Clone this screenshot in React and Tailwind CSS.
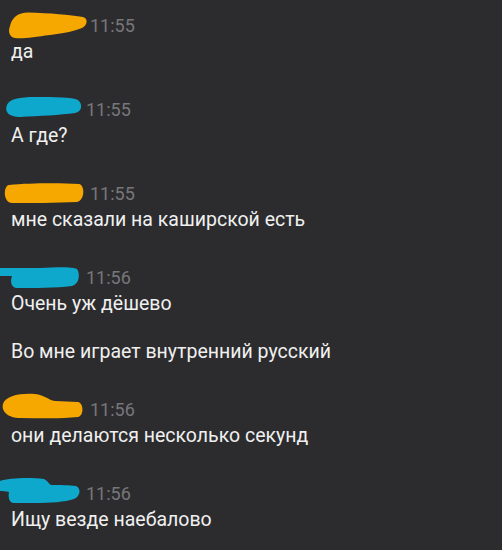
const ORANGE = '#f6a800';
const CYAN = '#0da8cc';

// scribbles over the sender names
const blobs = {
  o1: { w: 90, fill: ORANGE, d: 'M10,13 C12,4 18,0 28,-0.5 C50,0 70,2 83,4 C88,5 88,12 82,15 C75,18 65,20 50,22 C35,24 22,26 15,25 C9,24 8,18 10,13 Z' },
  c1: { w: 86, fill: CYAN, d: 'M7,8 C9,2 20,0 35,0 C55,0 72,0 78,3 C83,7 82,15 75,16 C60,18 40,19 20,20 C9,20 4,15 7,8 Z' },
  o2: { w: 90, fill: ORANGE, d: 'M9,4 C30,2 60,2 79,3 C85,4 85,19 77,21 C55,22 30,22 12,22 C3,22 3,5 9,4 Z' },
  c2: { w: 86, fill: CYAN, d: 'M0,3 L40,3 C60,2 72,2 77,4 C80,8 80,19 72,21 C55,23 35,23 17,23 C11,23 10,16 12,11 L0,11 Z' },
  o3: { w: 90, fill: ORANGE, d: 'M3,7 C5,-1 20,-4 35,-3 C45,-2 48,3 55,4 L78,5 C84,6 84,19 78,20 C60,22 40,21 20,21 C9,21 1,15 3,7 Z' },
  c3: { w: 86, fill: CYAN, d: 'M0,0 C8,-3 30,-4 44,-2 C48,0 49,3 51,4 C60,4 70,4 76,5 C81,7 81,15 74,18 C65,21 50,22 35,22 L14,22 C9,22 8,16 9,11 C6,10 2,10 0,10 Z' },
};

const messages = [
  { who: 'o1', time: '11:55', lines: ['да'] },
  { who: 'c1', time: '11:55', lines: ['А где?'] },
  { who: 'o2', time: '11:55', lines: ['мне сказали на каширской есть'] },
  { who: 'c2', time: '11:56', lines: ['Очень уж дёшево', 'Во мне играет внутренний русский'] },
  { who: 'o3', time: '11:56', lines: ['они делаются несколько секунд'] },
  { who: 'c3', time: '11:56', lines: ['Ищу везде наебалово'] },
];

const Header = ({ who, time }) => {
  const b = blobs[who];
  return (
    <div className="flex h-[26px] items-start text-[18px] leading-[26px]">
      <svg width={b.w} height="26" viewBox={`0 0 ${b.w} 26`} className="shrink-0 overflow-visible">
        <path d={b.d} fill={b.fill} />
      </svg>
      <span className="text-[#77777a]">{time}</span>
    </div>
  );
};

export default function App() {
  return (
    <div className="min-h-[550px] w-[502px] bg-[#2c2c2e] pt-[13px] font-['Roboto','Liberation_Sans',sans-serif]">
      {messages.map((m, i) => (
        <div key={i} className="mb-[32px]">
          <Header who={m.who} time={m.time} />
          <div className="flex flex-col gap-[22px] pl-[11px] text-[19.5px] text-[#f0f0f0] leading-[26px]">
            {m.lines.map((l, j) => (
              <div key={j}>{l}</div>
            ))}
          </div>
        </div>
      ))}
    </div>
  );
}
